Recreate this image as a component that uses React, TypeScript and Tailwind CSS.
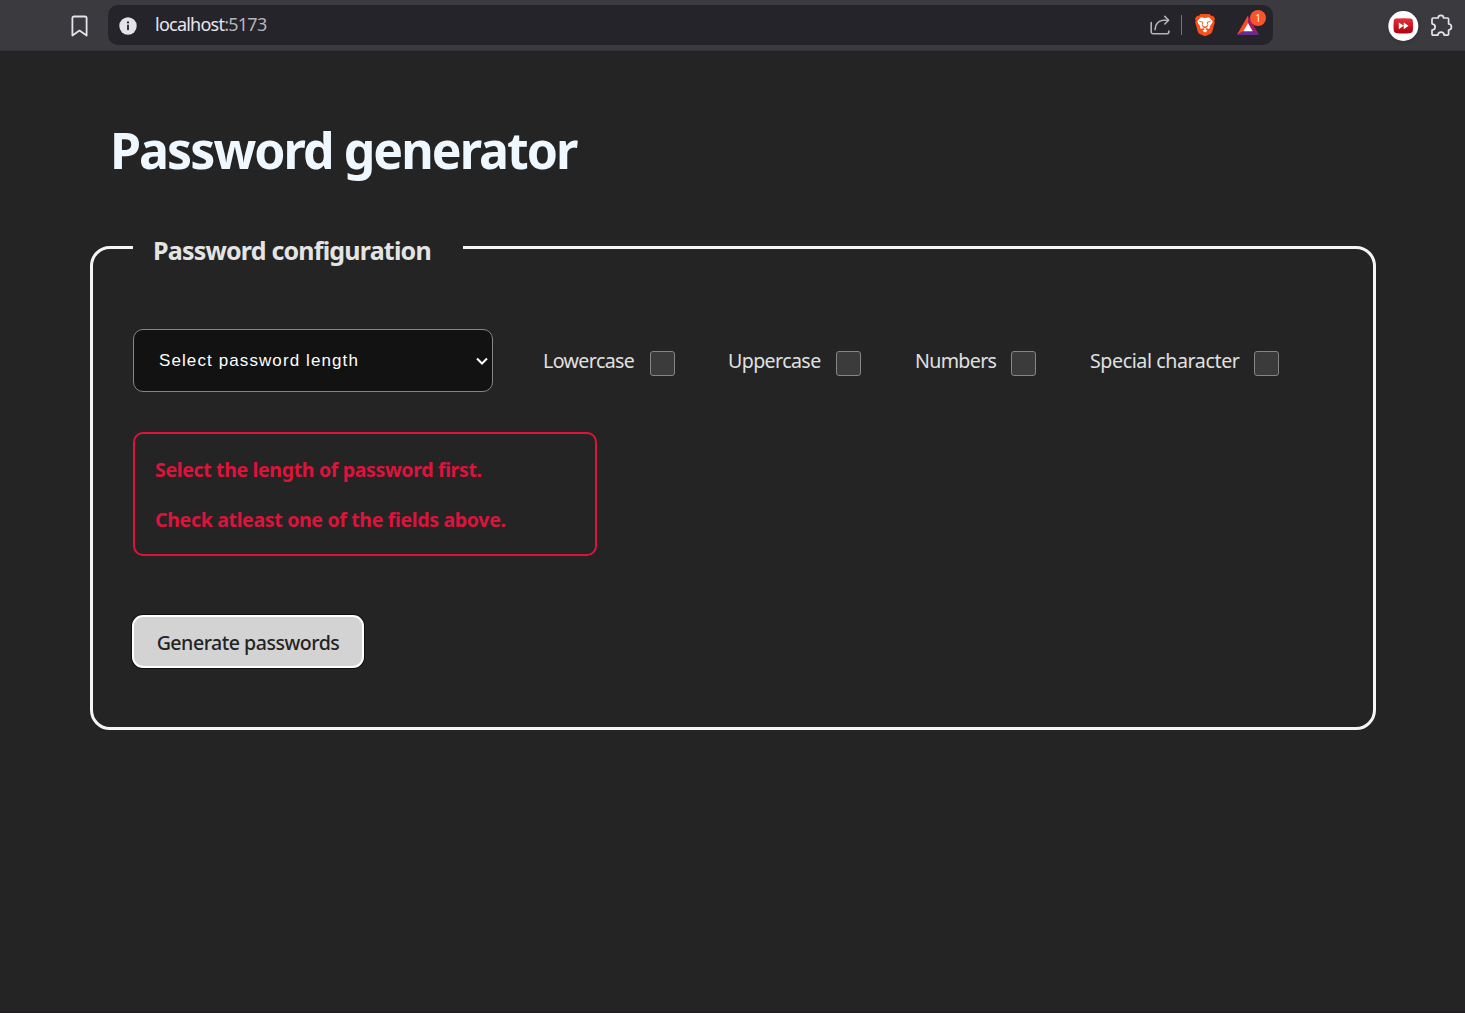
import React from "react";

const sans = "font-['Noto_Sans','Open_Sans',sans-serif]";

function BookmarkIcon() {
  return (
    <svg className="ml-[71px] mt-px h-[22px] w-[17px] shrink-0" viewBox="0 0 17 22" fill="none" stroke="#e4e3ea" strokeWidth="1.8" strokeLinejoin="round">
      <path d="M3 1.5h11a1.6 1.6 0 0 1 1.6 1.6V20.6L8.5 15.6 1.4 20.6V3.1A1.6 1.6 0 0 1 3 1.5Z" />
    </svg>
  );
}

function InfoIcon() {
  return (
    <svg className="ml-[11px] mt-px h-[18px] w-[18px] shrink-0" viewBox="0 0 18 18">
      <circle cx="9" cy="9" r="8.7" fill="#e4e3ea" />
      <circle cx="9" cy="5.4" r="1.1" fill="#25242a" />
      <rect x="8.1" y="7.7" width="1.8" height="5.4" fill="#25242a" />
    </svg>
  );
}

function ShareIcon() {
  return (
    <svg className="h-[22px] w-[22px] shrink-0" viewBox="0 0 22 22" fill="none" stroke="#b5b4bb" strokeWidth="1.6" strokeLinecap="round" strokeLinejoin="round">
      <path d="M2.2 8.6V17.8a2 2 0 0 0 2 2H17.9a2 2 0 0 0 2-2V17" />
      <path d="M6 15.6C6.4 10 9.8 6.6 14.2 6.2H19.2" />
      <path d="M15.8 2.4L19.6 6.2L15.8 10" />
    </svg>
  );
}

function BraveIcon() {
  return (
    <svg className="h-[24px] w-[22px] shrink-0" viewBox="0 0 22 24">
      <path d="M6.5 1h9l1.8 2 1.7-.3 2 2.8-.7 2.3.5 1.4-2.6 9.5c-.3 1-1 1.6-1.8 2.2L11 23.2l-5.4-2.3c-.8-.6-1.5-1.2-1.8-2.2L1.2 9.2l.5-1.4L1 5.5l2-2.8 1.7.3Z" fill="#f9501a" />
      <path d="M6.9 4.3l4.1.7 4.1-.7L18.6 8.2l-.6 2-2.2 3 .3 1.5-1.5 1.4-2-1-1.1 1.3 2 1.3-2.5 1.9-2.5-1.9 2-1.3-1.1-1.3-2 1-1.5-1.4.3-1.5-2.2-3-.6-2Z" fill="#fff" />
      <path d="M5.3 8.3l3.6.9-.7 2.2.7 1.8 2.1 1.2 2.1-1.2.7-1.8-.7-2.2 3.6-.9" fill="none" stroke="#f9501a" strokeWidth="0.9" />
      <path d="M8.7 13.2l2.3 1.5 2.3-1.5" fill="none" stroke="#f9501a" strokeWidth="1.2" />
    </svg>
  );
}

function RewardsIcon() {
  return (
    <div className="relative h-[24px] w-[30px] shrink-0">
      <svg className="h-[24px] w-[24px]" viewBox="0 0 24 24">
        <path d="M12 2.5L.8 22l6.9-4L12 10.5Z" fill="#ff4a24" />
        <path d="M12 2.5l11.2 19.5-6.9-4L12 10.5Z" fill="#9e1f63" />
        <path d="M.8 22h22.4l-6.9-4H7.7Z" fill="#662d91" />
        <path d="M12 10l4.7 8.2H7.3Z" fill="#fff" />
      </svg>
      <span className="absolute -top-[3px] left-[14px] flex h-[16px] w-[16px] items-center justify-center rounded-full bg-[#fb542b] text-[10px] leading-none text-white">1</span>
    </div>
  );
}

function SkipIcon() {
  return (
    <svg className="ml-[113px] mt-px h-[34px] w-[34px] shrink-0 drop-shadow-sm" viewBox="0 0 34 34">
      <defs>
        <linearGradient id="skipRed" x1="0" y1="0" x2="0" y2="1">
          <stop offset="0" stopColor="#e8303a" />
          <stop offset="1" stopColor="#ae000c" />
        </linearGradient>
      </defs>
      <circle cx="17.3" cy="17" r="15" fill="#fff" />
      <path d="M9.9 9.6Q17.3 8.8 24.7 9.6Q26.8 10 26.9 12.1Q27.3 17 26.9 21.3Q26.7 23.7 24.5 24Q17.3 25 10.1 24Q7.9 23.7 7.7 21.3Q7.3 16.5 7.7 12.1Q7.8 10 9.9 9.6Z" fill="url(#skipRed)" />
      <path d="M12.8 13.4l4.9 3.4-4.9 3.4ZM17.7 13.4l4.9 3.4-4.9 3.4Z" fill="#fff" />
    </svg>
  );
}

function PuzzleIcon() {
  return (
    <svg className="ml-[10px] mt-px h-[23px] w-[23px] shrink-0" viewBox="0 0 23 23" fill="none" stroke="#e4e3ea" strokeWidth="1.7" strokeLinejoin="round">
      <path d="M3.2 4H8.2C8.2 .6 13.6 .6 13.6 4H17.5Q18.6 4 18.6 5.2V10C22.4 10.2 22.4 15.8 18.6 16V19.9Q18.6 21.1 17.5 21.1H14.2C13.8 17.2 8.3 17.2 7.9 21.1H3.2Q2 21.1 2 19.9V16C6.2 15.6 6.2 10.2 2 9.8V5.2Q2 4 3.2 4Z" />
    </svg>
  );
}

function BrowserBar() {
  return (
    <header className={`flex h-[51px] shrink-0 items-center border-b border-[#333236] bg-[#3b3a3f] ${sans}`}>
      <BookmarkIcon />
      <div className="ml-[20px] flex h-[40px] w-[1165px] shrink-0 items-center rounded-[10px] bg-[#25242a]">
        <InfoIcon />
        <div className="-mt-[2px] ml-[18px] text-[18px] leading-none tracking-[-0.76px] text-[#e8e7ee]">
          localhost<span className="text-[#b5b4bb]">:5173</span>
        </div>
        <div className="ml-auto flex items-center pr-[7px]">
          <ShareIcon />
          <div className="ml-[10px] h-[20px] w-px bg-[#77767c]" />
          <div className="ml-[12px]"><BraveIcon /></div>
          <div className="ml-[20px]"><RewardsIcon /></div>
        </div>
      </div>
      <SkipIcon />
      <PuzzleIcon />
    </header>
  );
}

const options = [
  { label: "Lowercase", box: "w-[185px]", text: "w-[107px] tracking-[-0.6px]" },
  { label: "Uppercase", box: "w-[187px]", text: "w-[108px] tracking-[-0.6px]" },
  { label: "Numbers", box: "w-[175px]", text: "w-[96px] tracking-[-0.65px]" },
  { label: "Special character", box: "w-[190px]", text: "w-[164px] tracking-[-0.4px]" },
];

export default function App() {
  return (
    <div className="flex h-[1013px] w-[1465px] flex-col overflow-hidden border-b-2 border-[#211d20] bg-[#242424]">
      <BrowserBar />
      <main className={`px-[90px] ${sans}`}>
        <h1 className="ml-[20px] mt-[65px] h-[70px] whitespace-nowrap text-[50px] font-bold leading-[69px] tracking-[-1.95px] text-[#f0f8ff]">
          Password generator
        </h1>
        <fieldset className="mt-[46px] h-[498px] w-[1286px] rounded-[20px] border-[3px] border-[#f5f5f5] px-[40px]">
          <legend className="h-[30px] w-[330px] whitespace-nowrap pl-[20px] text-[25px] font-bold leading-[36px] tracking-[-0.8px] text-[#e4e4e4]">
            Password configuration
          </legend>
          <div className="mt-[67px] flex h-[63px] items-center">
            <button className="flex h-[63px] w-[360px] items-center justify-between rounded-[10px] border border-[#858585] bg-[#121212] pl-[25px] pr-[4px] font-['Liberation_Sans',Arial,sans-serif] text-[17px] tracking-[1.1px] text-white">
              Select password length
              <svg className="h-[12px] w-[12px]" viewBox="0 0 12 12" fill="none" stroke="#fff" strokeWidth="2">
                <path d="M1 3.5l5 5 5-5" />
              </svg>
            </button>
            <div className="ml-[50px] flex">
              {options.map((o) => (
                <label key={o.label} className={`flex items-center ${o.box}`}>
                  <span className={`whitespace-nowrap text-[19.6px] leading-[28px] text-[#e0e0e0] ${o.text}`}>{o.label}</span>
                  <input type="checkbox" className="relative top-[3px] h-[25px] w-[25px] shrink-0 appearance-none rounded-[3px] border border-[#858585] bg-[#3b3b3b]" />
                </label>
              ))}
            </div>
          </div>
          <div className="mt-[40px] flex h-[124px] w-[464px] flex-col gap-[20px] rounded-[10px] border-2 border-[#dc143c] px-[20px] pt-[21px] text-[19.6px] font-bold leading-[30px] text-[#dc143c]">
            <p className="tracking-[-0.38px]">Select the length of password first.</p>
            <p className="tracking-[-0.37px]">Check atleast one of the fields above.</p>
          </div>
          <button className="-ml-px mt-[59px] flex h-[53px] w-[232px] items-center justify-center whitespace-nowrap rounded-[11px] border-2 border-white bg-[#d3d3d3] pt-[2px] text-[19.6px] font-medium tracking-[-0.5px] text-[#242424] shadow-[0_0_0_1px_#101010]">
            Generate passwords
          </button>
        </fieldset>
      </main>
    </div>
  );
}
